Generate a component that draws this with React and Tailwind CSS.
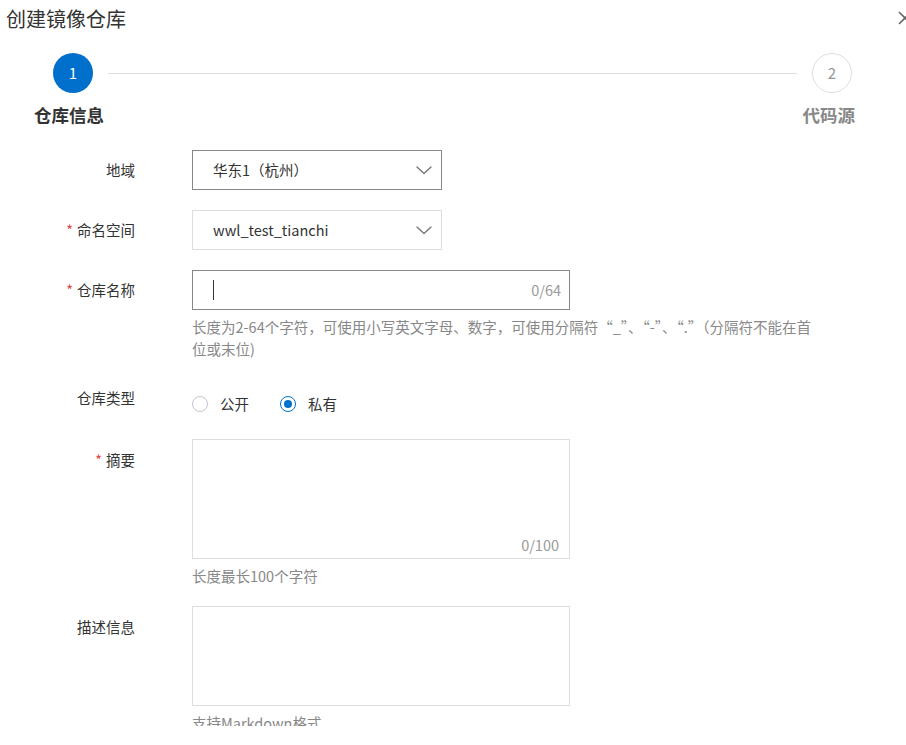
import React from 'react';

const FONT = { fontFamily: '"Microsoft YaHei", "Noto Sans CJK SC", "Noto Sans", sans-serif' };

const Chevron = () => (
  <svg width="18" height="18" viewBox="0 0 18 18" fill="none" stroke="#777" strokeWidth="1.4" strokeLinecap="round" strokeLinejoin="round">
    <polyline points="2,6 9,12.5 16,6" />
  </svg>
);

const Label = ({ required, children, className = '' }) => (
  <div className={`w-[135px] shrink-0 text-right text-[14.5px] leading-[20px] text-[#333] ${className}`}>
    {required && <span className="text-[#e54545] mr-[4px]">*</span>}
    {children}
  </div>
);

const Radio = ({ checked, label }) => (
  <label className="flex items-center mr-[31px]">
    <span
      className={`w-[16px] h-[16px] rounded-full border flex items-center justify-center ${
        checked ? 'border-[#0070cc]' : 'border-[#c4c6cf]'
      }`}
    >
      {checked && <span className="w-[8px] h-[8px] rounded-full bg-[#0070cc]" />}
    </span>
    <span className="ml-[12px] text-[14.5px] text-[#333]">{label}</span>
  </label>
);

export default function App() {
  return (
    <div className="relative w-[906px] h-[745px] overflow-hidden bg-white" style={FONT}>
      <div className="h-[726px] overflow-hidden">
        {/* header */}
        <div className="pt-[6px] pl-[6px] text-[20px] leading-[26px] text-[#333]">创建镜像仓库</div>
        <div className="absolute top-[11px] left-[898px]">
          <svg width="14" height="14" viewBox="0 0 14 14" stroke="#666" strokeWidth="1.6" fill="none">
            <path d="M1 1 L13 13 M13 1 L1 13" />
          </svg>
        </div>

        {/* steps */}
        <div className="mt-[21px] flex items-center pl-[53px] pr-[54px]">
          <div className="w-[40px] h-[40px] rounded-full bg-[#0070cc] text-white flex items-center justify-center text-[15px]">1</div>
          <div className="flex-1 mx-[15px] h-px bg-[#dcdee3]" />
          <div className="w-[40px] h-[40px] rounded-full border border-[#dcdee3] text-[#999] flex items-center justify-center text-[15px]">2</div>
        </div>
        <div className="mt-[11px] flex justify-between pl-[34px] pr-[51px] text-[17.5px] leading-[22px] font-bold">
          <span className="text-[#333]">仓库信息</span>
          <span className="text-[#888]">代码源</span>
        </div>

        {/* form */}
        <div className="mt-[24px] flex flex-col">
          <div className="flex items-center h-[40px]">
            <Label>地域</Label>
            <div className="ml-[57px] w-[250px] h-[40px] border border-[#888] flex items-center justify-between pl-[20px] pr-[8px] text-[14.5px] text-[#333]">
              <span>华东1（杭州）</span>
              <Chevron />
            </div>
          </div>

          <div className="flex items-center h-[40px] mt-[20px]">
            <Label required>命名空间</Label>
            <div className="ml-[57px] w-[250px] h-[40px] border border-[#dcdee3] flex items-center justify-between pl-[20px] pr-[8px] text-[14.5px] text-[#333]">
              <span>wwl_test_tianchi</span>
              <Chevron />
            </div>
          </div>

          <div className="flex mt-[20px]">
            <Label required className="pt-[10px]">仓库名称</Label>
            <div className="ml-[57px]">
              <div className="w-[378px] h-[40px] border border-[#888] flex items-center justify-between pl-[20px] pr-[8px] text-[14.5px]">
                <span className="w-px h-[20px] bg-[#333]" />
                <span className="text-[#999]">0/64</span>
              </div>
              <div className="mt-[6px] w-[625px] text-[14.5px] leading-[22px] text-[#888]">
                长度为2-64个字符，可使用小写英文字母、数字，可使用分隔符“_”、“-”、“.”（分隔符不能在首位或末位)
              </div>
            </div>
          </div>

          <div className="flex mt-[28px]">
            <Label>仓库类型</Label>
            <div className="ml-[57px] flex items-center mt-[5px]">
              <Radio label="公开" />
              <Radio checked label="私有" />
            </div>
          </div>

          <div className="flex mt-[24px]">
            <Label required className="pt-[11px]">摘要</Label>
            <div className="ml-[57px]">
              <div className="relative w-[378px] h-[120px] border border-[#dcdee3]">
                <span className="absolute right-[10px] bottom-[2px] text-[14.5px] leading-[22px] text-[#999]">0/100</span>
              </div>
              <div className="mt-[6px] text-[14.5px] leading-[22px] text-[#888]">长度最长100个字符</div>
            </div>
          </div>

          <div className="flex mt-[19px]">
            <Label className="pt-[11px]">描述信息</Label>
            <div className="ml-[57px]">
              <div className="w-[378px] h-[100px] border border-[#dcdee3]" />
              <div className="mt-[6px] text-[14.5px] leading-[22px] text-[#888]">支持Markdown格式</div>
            </div>
          </div>
        </div>
      </div>
    </div>
  );
}
